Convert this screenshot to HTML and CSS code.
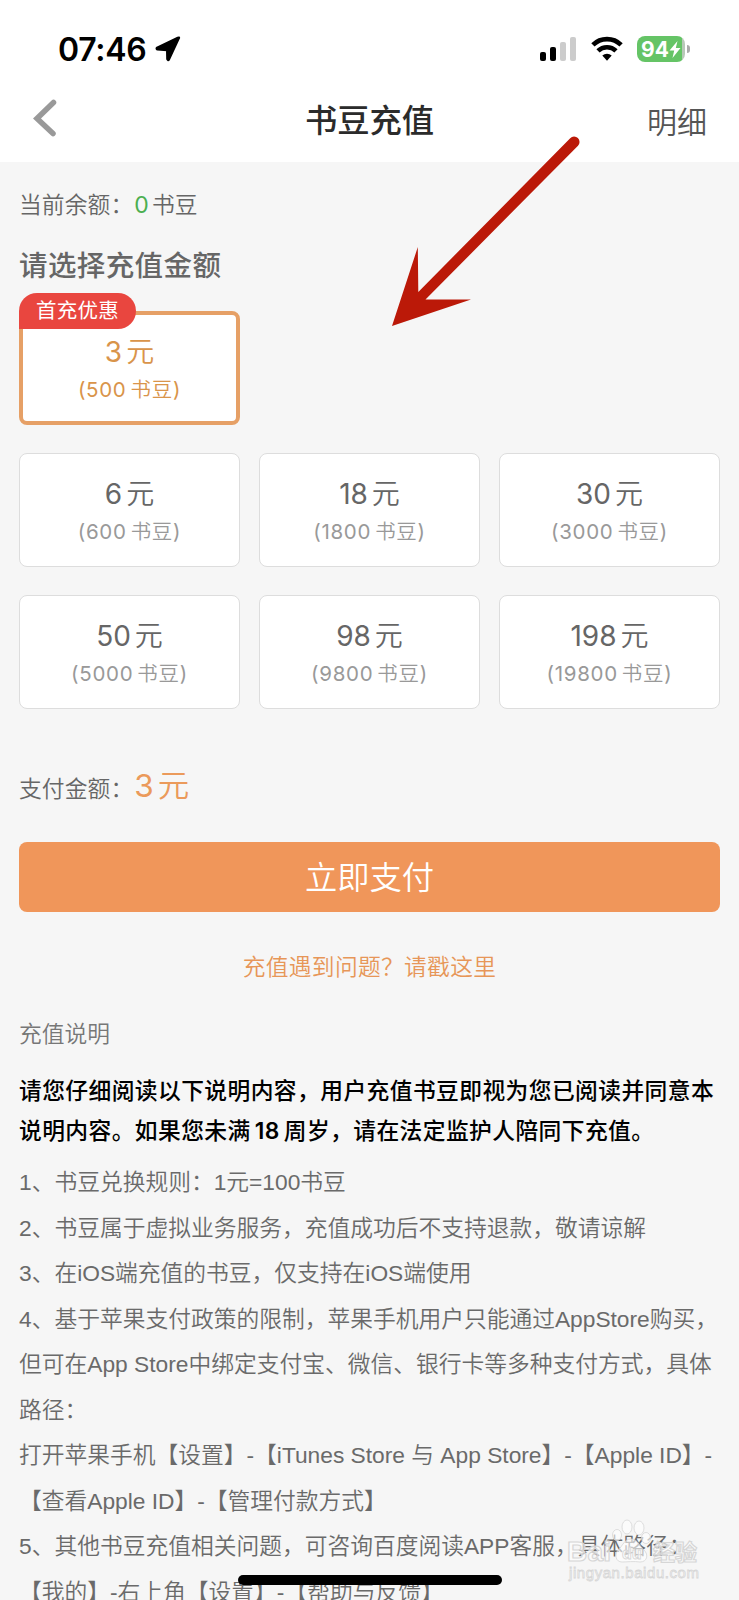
FILE: index.html
```
<!DOCTYPE html>
<html lang="zh-CN">
<head>
<meta charset="utf-8">
<title>书豆充值</title>
<link rel="stylesheet" href="styles.css">
</head>
<body>
<div class="screen">
  <header class="header">
    <div class="status">
      <div class="status-left">
        <span class="time">07:46</span>
        <svg class="location" width="26" height="26" viewBox="0 0 26 26"><path stroke="#000" stroke-width="2" stroke-linejoin="round" d="M24 2.200 14 23.600Q13 25 12.200 23.200L12 14.200 2.400 13.600Q.8 12.600 2 11.600L22.800 1.600Q24.600 1 24 2.200Z"/></svg>
      </div>
      <div class="status-right">
        <svg width="38" height="26" viewBox="0 0 38 26"><rect x="1" y="16" width="6" height="9" rx="2"/><rect x="11" y="11" width="6" height="14" rx="2"/><rect x="21" y="6" width="6" height="19" rx="2" fill="#ccc"/><rect x="31" y="1" width="6" height="24" rx="2" fill="#ccc"/></svg>
        <svg width="32" height="25" viewBox="0 0 32 25"><g fill="none" stroke="#000" stroke-width="4.600"><path d="M1.900 8.900a20 20 0 0 1 28.200 0"/><path d="M7 14.900a13 13 0 0 1 18 0"/></g><path d="M11.300 19.600a7 7 0 0 1 9.400 0L16 24.800Z"/></svg>
        <div class="battery"><span>94</span><svg width="12" height="17" viewBox="0 0 12 17"><path d="M8.500 0 .5 9.500h4.700L3.500 17l8-10H6.800Z" fill="#fff"/></svg></div>
      </div>
    </div>
    <nav class="nav">
      <svg class="back" width="26" height="40" viewBox="0 0 26 40"><path d="M21.500 3.500 5 19.500 21 34.500" fill="none" stroke="#999" stroke-width="5.500" stroke-linecap="round"/></svg>
      <h1 class="title">书豆充值</h1>
      <a class="detail">明细</a>
    </nav>
  </header>

  <main class="content">
    <p class="balance">当前余额：<span class="num">0</span>书豆</p>
    <h2 class="choose">请选择充值金额</h2>
    <div class="grid">
      <div class="card selected"><span class="badge">首充优惠</span><b>3<i>元</i></b><small>(500<i>书豆</i>)</small></div>
      <div class="card first-row"><b>6<i>元</i></b><small>(600<i>书豆</i>)</small></div>
      <div class="card"><b>18<i>元</i></b><small>(1800<i>书豆</i>)</small></div>
      <div class="card"><b>30<i>元</i></b><small>(3000<i>书豆</i>)</small></div>
      <div class="card"><b>50<i>元</i></b><small>(5000<i>书豆</i>)</small></div>
      <div class="card"><b>98<i>元</i></b><small>(9800<i>书豆</i>)</small></div>
      <div class="card"><b>198<i>元</i></b><small>(19800<i>书豆</i>)</small></div>
    </div>
    <p class="pay"><span>支付金额：</span><span class="amount">3<i>元</i></span></p>
    <button class="submit">立即支付</button>
    <p class="help">充值遇到问题？请戳这里</p>
    <h3 class="notes-title">充值说明</h3>
    <p class="notice">请您仔细阅读以下说明内容，用户充值书豆即视为您已阅读并同意本<br>说明内容。如果您未满<span class="age">18</span>周岁，请在法定监护人陪同下充值。</p>
    <div class="notes">
      <p>1、书豆兑换规则：1元=100书豆</p>
      <p>2、书豆属于虚拟业务服务，充值成功后不支持退款，敬请谅解</p>
      <p>3、在iOS端充值的书豆，仅支持在iOS端使用</p>
      <p>4、基于苹果支付政策的限制，苹果手机用户只能通过AppStore购买，<br>但可在App Store中绑定支付宝、微信、银行卡等多种支付方式，具体<br>路径：</p>
      <p>打开苹果手机【设置】-【iTunes Store 与 App Store】-【Apple ID】-<br>【查看Apple ID】-【管理付款方式】</p>
      <p>5、其他书豆充值相关问题，可咨询百度阅读APP客服，具体路径：<br>【我的】-右上角【设置】-【帮助与反馈】</p>
    </div>
  </main>

  <svg class="pointer" width="190" height="192" viewBox="0 0 190 192"><path d="M2 190 27.800 111 28.300 156 180.200 2.200A5.400 5.400 0 0 1 188 9.800L35.500 163.500 81 163.500Z" fill="#bb1908"/></svg>
  <svg class="watermark" width="140" height="72" viewBox="0 0 140 72">
    <g class="mark">
      <text class="bold" x="1" y="43" font-size="28" textLength="44">Bai</text>
      <text class="bold" x="87" y="42" font-size="22">经验</text>
      <path d="M65 21c-7 0-8 7-13 11-4 5-2 12 4 12 5 0 12-1 18 0 7 0 9-7 4-12-5-4-6-11-13-11Z"/>
      <ellipse cx="51" cy="17" rx="4.500" ry="5.500"/><ellipse cx="61" cy="9" rx="5" ry="7"/><ellipse cx="73" cy="10" rx="5" ry="7"/><ellipse cx="80" cy="20" rx="4.500" ry="5.500"/>
      <text x="56" y="41" font-size="16" font-weight="700">du</text>
      <text x="3" y="60" font-size="15" textLength="130">jingyan.baidu.com</text>
    </g>
  </svg>
  <div class="home-bar"></div>
</div>
</body>
</html>
```
FILE: styles.css
```
* { box-sizing: border-box; }
body, h1, h2, h3, p { margin: 0; }
i { font-style: normal; }
body { background: #f6f6f6; }

.screen {
  position: relative;
  width: 739px;
  height: 1600px;
  overflow: hidden;
  background: #f6f6f6;
  color: #666;
  font-family: Inter, "Noto Sans CJK SC", sans-serif;
  font-size: 22.75px;
}

.header { height: 162px; background: #fff; color: #000; }
.status { display: flex; justify-content: space-between; padding: 36px 54px 0 58px; height: 78px; }
.status-left, .status-right { display: flex; align-items: flex-start; }
.time { font-size: 32px; line-height: 28px; font-weight: 600; width: 97px; letter-spacing: -.3px; white-space: nowrap; }
.status-right { gap: 14px; }
.battery {
  position: relative;
  display: flex;
  align-items: center;
  width: 48px;
  height: 26px;
  padding-left: 4px;
  border-radius: 8px;
  background: linear-gradient(90deg, #65c466 94%, #b8c8b8 94%);
  color: #fff;
  font-size: 21px;
  font-weight: 700;
}
.battery::after { content: ""; position: absolute; left: 50px; top: 9px; width: 2.500px; height: 8px; border-radius: 0 4px 4px 0; background: #aaa; }
.nav { display: grid; grid-template-columns: 1fr auto 1fr; align-items: center; height: 84px; padding: 0 32px; }
.back { margin-top: -2px; }
.title { margin-top: 2px; font-size: 32.300px; line-height: 48px; font-weight: 500; color: #2b2b2b; }
.detail { justify-self: end; margin-top: 3px; font-size: 30px; line-height: 44px; color: #555; font-weight: 350; }

.content { padding: 0 19px; }
.balance { padding-top: 25px; line-height: 36px; letter-spacing: .1px; font-weight: 350; }
.num { margin: 0 3px 0 1px; color: #4caf50; font-weight: 400; font-size: 23px; }
.choose { margin-top: 23px; font-size: 28.500px; line-height: 40px; font-weight: 500; letter-spacing: .4px; }
.grid { display: grid; grid-template-columns: repeat(3, 1fr); gap: 28px 19px; margin-top: 25px; }
.card {
  display: flex;
  flex-direction: column;
  align-items: center;
  height: 114px;
  padding-top: 22px;
  border: 1px solid #ddd;
  border-radius: 8px;
  background: #fff;
}
.card b { font-size: 28px; line-height: 36px; font-weight: 400; }
.card b i { margin-left: 4px; font-weight: 350; }
.card small { margin-top: 2px; color: #999; font-size: 20.500px; line-height: 36px; letter-spacing: .7px; font-weight: 400; }
.card small i { margin-left: 4px; font-weight: 350; }
.first-row { grid-column-start: 1; }
.selected { position: relative; padding-top: 19px; border: 4px solid #e6a066; color: #d9944a; }
.selected small { color: #d9944a; }
.badge {
  position: absolute;
  left: -4px;
  top: -22px;
  width: 117px;
  height: 36px;
  border-radius: 18px 18px 18px 0;
  background: #e9463f;
  color: #fff;
  font-size: 20.500px;
  line-height: 36px;
  letter-spacing: .2px;
  text-align: center;
}
.pay { display: flex; align-items: baseline; margin-top: 53px; line-height: 48px; font-weight: 350; letter-spacing: .1px; }
.amount { margin-left: 1px; color: #eb9a5b; font-size: 31.500px; font-weight: 400; }
.amount i { margin-left: 4px; font-weight: 350; }
.submit {
  display: block;
  width: 100%;
  height: 70px;
  margin-top: 29px;
  padding: 0 0 4px;
  border: 0;
  border-radius: 8px;
  background: #f0965a;
  color: #fff;
  font: 350 32.300px/66px "Noto Sans CJK SC", sans-serif;
}
.help { margin-top: 37px; line-height: 36px; text-align: center; color: #e79658; font-weight: 350; letter-spacing: .3px; }
.notes-title { margin-top: 31px; font-size: 22.750px; line-height: 36px; font-weight: 350; color: #777; }
.notice { margin-top: 19px; color: #000; line-height: 40px; font-weight: 500; letter-spacing: .42px; white-space: nowrap; }
.age { margin: 0 4px; font-weight: 600; }
.notes { margin-top: 9px; line-height: 45.500px; font-family: "Liberation Sans", "Noto Sans CJK SC", sans-serif; font-weight: 350; white-space: nowrap; color: #6a6a6a; }

.pointer { position: absolute; left: 390px; top: 136px; }
.watermark { position: absolute; left: 566px; top: 1518px; }
.mark { fill: #fff; fill-opacity: .6; stroke: #d6d6d6; stroke-width: .8; font-family: "Liberation Sans", "Noto Sans CJK SC", sans-serif; }
.bold { font-weight: 700; stroke-width: 1.200; }
.home-bar { position: absolute; left: 238px; top: 1575px; width: 264px; height: 10px; border-radius: 5px; background: #000; }
```
